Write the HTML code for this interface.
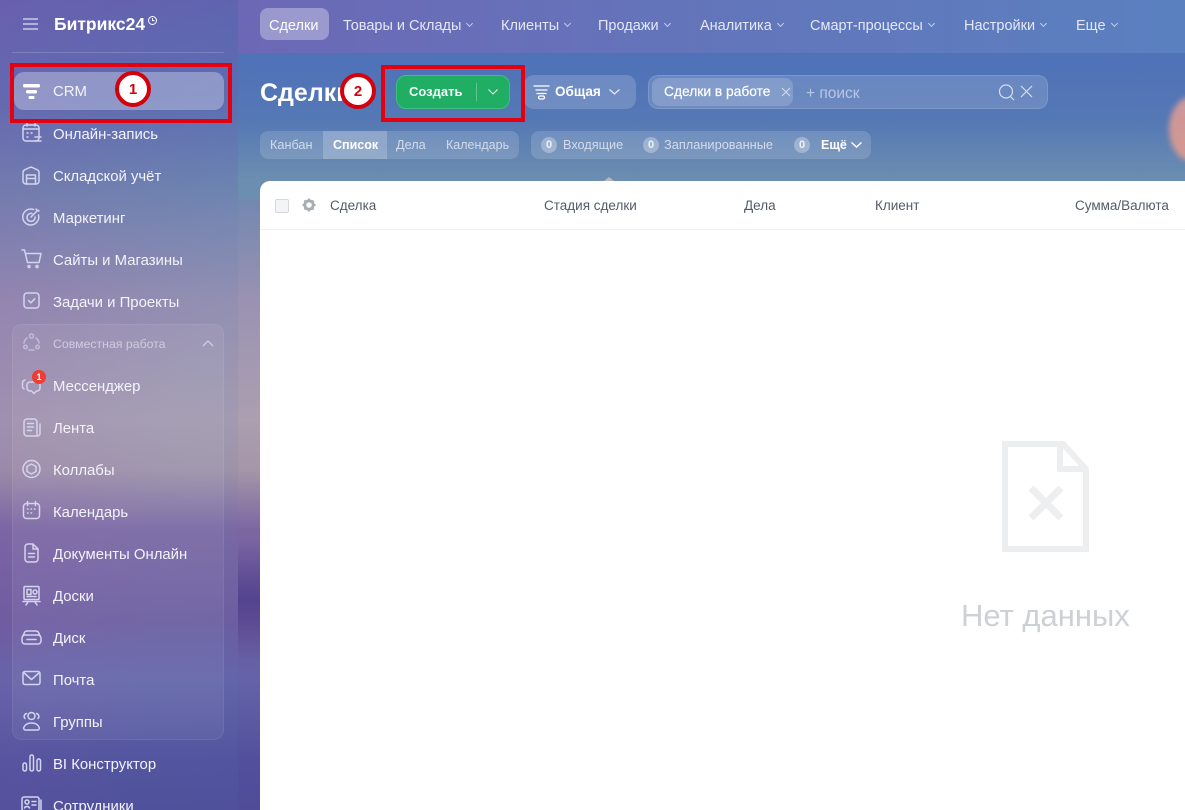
<!DOCTYPE html>
<html lang="ru"><head><meta charset="utf-8"><title>Сделки</title>
<style>
*{box-sizing:border-box}
html,body{margin:0;padding:0;width:1185px;height:810px;overflow:hidden;background:#4f72b8}
body{position:relative;font-family:"Liberation Sans","Noto Sans CJK SC",sans-serif;color:#fff}
.a{position:absolute;white-space:nowrap}
#bg{position:absolute;left:0;top:0;width:1185px;height:810px;overflow:hidden;background:linear-gradient(180deg,#5f62b0 0,#5a6db2 100px,#6f86b0 190px,#9a92b2 300px,#ab9fb0 420px,#a596a8 470px,#7c66a2 530px,#6d5a9e 620px,#6463a8 680px,#52509c 760px,#4f4c98 810px)}
#sd{position:absolute;left:0;top:0;width:238px;height:810px;background:linear-gradient(100deg,rgba(130,90,170,.28),rgba(90,120,180,.12) 70%,rgba(90,120,180,.1))}
#mainbg{position:absolute;left:238px;top:0;width:947px;height:200px;background:linear-gradient(180deg,#5a6cb6 0,#4f72b8 60px,#5578b5 120px,#6c8eb0 181px)}
#top{position:absolute;left:238px;top:0;width:947px;height:53px;background:linear-gradient(90deg,#6c68b6,#6474ba 45%,#5a80c0)}
.nav{position:absolute;top:18px;font-size:14.5px;line-height:17px;color:#e4e8f6;white-space:nowrap}
.nav i{display:inline-block;width:5px;height:5px;border-right:1px solid #c6cde8;border-bottom:1px solid #c6cde8;transform:rotate(45deg);margin:0 1px 4px 6px}
.it{position:absolute;left:53px;margin-top:1px;font-size:14.9px;line-height:18px;color:#f3f3fb;white-space:nowrap}
svg{position:absolute;overflow:visible;fill:none}
.ic{left:21px;width:24px;height:24px;stroke:#d4d4ee;stroke-width:1.5;stroke-linecap:round;stroke-linejoin:round}
.rb{position:absolute;border:4px solid #e3000f}
.num{position:absolute;width:36px;height:36px;border-radius:50%;border:4px solid #d4000c;background:#fff;color:#d4000c;font-weight:bold;font-size:15px;line-height:29px;text-align:center}
.seg{position:absolute;top:131px;height:28px;line-height:28px;font-size:12.7px;color:#d3dcec;white-space:nowrap}
.zero{position:absolute;top:137px;width:16px;height:16px;border-radius:50%;background:rgba(255,255,255,.3);color:#eef2f8;font-size:11px;font-weight:bold;line-height:16px;text-align:center}
.th{position:absolute;top:197px;font-size:13.5px;line-height:17px;color:#525c69;white-space:nowrap}
</style></head><body>
<div id="bg"></div><div id="sd"></div>
<div class="a" style="left:238px;top:540px;width:22px;height:120px;background:linear-gradient(180deg,rgba(74,58,136,0),rgba(74,58,136,.75) 50%,rgba(74,58,136,0))"></div>
<div id="mainbg"></div>
<div class="a" style="left:1169px;top:97px;width:44px;height:64px;border-radius:50%;background:linear-gradient(180deg,#d89c98,#e29a8c);filter:blur(3px);opacity:.9"></div>
<div class="a" style="left:604px;top:177px;width:0;height:0;border-left:5px solid transparent;border-right:5px solid transparent;border-bottom:4px solid #b8b8b8"></div>
<div id="top"></div>

<!-- logo -->
<svg style="left:23px;top:18px;width:16px;height:12px;stroke:#c8cbea;stroke-width:1.4"><path d="M0 1h15M0 6h15M0 11h15"/></svg>
<div class="a" style="left:54px;top:13px;font-size:17.5px;font-weight:bold;line-height:22px;color:#fff">Битрикс24</div>
<svg style="left:148px;top:16px;width:9px;height:9px;stroke:#fff;stroke-width:1"><circle cx="4.500" cy="4.500" r="4"/><path d="M4.500 2v2.600h2"/></svg>
<div class="a" style="left:12px;top:52px;width:212px;height:1px;background:rgba(255,255,255,.17)"></div>

<!-- groups -->
<div class="a" style="left:14px;top:72px;width:210px;height:38px;border-radius:10px;background:rgba(255,255,255,.3)"></div>
<div class="a" style="left:12px;top:324px;width:212px;height:416px;border-radius:10px;background:rgba(255,255,255,.06);border:1px solid rgba(255,255,255,.06)"></div>

<!-- sidebar items -->
<svg style="left:23px;top:84px;width:17px;height:16px;fill:#fff"><rect x="0" y="0" width="17" height="3.500" rx="1.500"/><rect x="3" y="6" width="11" height="3.500" rx="1.500"/><rect x="5.500" y="12" width="6" height="3" rx="1.400"/></svg>
<div class="it" style="top:82px">CRM</div>

<svg class="ic" style="top:122px"><rect x="2" y="3" width="16" height="16" rx="3"/><path d="M6 1v3M14 1v3M2 7h16M6 11h1M10 11h1M6 15h1M14 15h6M14 19h6"/></svg>
<div class="it" style="top:125px">Онлайн-запись</div>
<svg class="ic" style="top:164px"><path d="M2 8.500a3 3 0 0 1 1.700-2.700l5-2.300a3 3 0 0 1 2.600 0l5 2.300a3 3 0 0 1 1.700 2.700V17a3 3 0 0 1-3 3H5a3 3 0 0 1-3-3z"/><path d="M5.500 20v-9h9v9M5.500 14.500h9"/></svg>
<div class="it" style="top:167px">Складской учёт</div>
<svg class="ic" style="top:206px"><path d="M17.500 9a8 8 0 1 1-5-5.500M14 11a4 4 0 1 1-3-3.500"/><path d="M10 11l7-7M15 3l1 1.500 2 .5"/></svg>
<div class="it" style="top:209px">Маркетинг</div>
<svg class="ic" style="top:248px"><path d="M1 2h2.500l3 12.500h11.500l2-9H4.500"/><circle cx="8" cy="18.500" r="1"/><circle cx="16" cy="18.500" r="1"/></svg>
<div class="it" style="top:251px">Сайты и Магазины</div>
<svg class="ic" style="top:290px"><rect x="3" y="3" width="15" height="15" rx="3"/><path d="M7.500 10.500l2.300 2.300 4-4"/></svg>
<div class="it" style="top:293px">Задачи и Проекты</div>

<svg class="ic" style="top:332px;opacity:.65"><circle cx="10.500" cy="4" r="2"/><circle cx="4.500" cy="15" r="1.800"/><circle cx="16.500" cy="15" r="1.800"/><path d="M6 6a8 8 0 0 0-3 5M15 6a8 8 0 0 1 3 5M8 18h5"/></svg>
<div class="a" style="left:53px;top:337px;font-size:12.300px;line-height:15px;color:#cfcbe0">Совместная работа</div>
<svg style="left:202px;top:340px;width:13px;height:7px;stroke:#cfcbe0;stroke-width:1.300"><path d="M1 6l5-5 5 5"/></svg>

<svg class="ic" style="top:374px"><path d="M4 6a3 3 0 0 0-2.500 3v3a3 3 0 0 0 1.500 3"/><path d="M9 8h7a3 3 0 0 1 3 3v3a3 3 0 0 1-3 3h-.500l-2.500 2.500-2.500-2.500H9a3 3 0 0 1-3-3v-3a3 3 0 0 1 3-3z"/></svg>
<div class="a" style="left:32px;top:370px;width:14px;height:14px;border-radius:50%;background:#ee3d35;color:#fff;font-size:9px;font-weight:bold;line-height:14px;text-align:center">1</div>
<div class="it" style="top:377px">Мессенджер</div>
<svg class="ic" style="top:416px"><path d="M16 20H6a3 3 0 0 1-3-3V6a3 3 0 0 1 3-3h7a3 3 0 0 1 3 3v14a3 3 0 0 0 3-2V8"/><path d="M6.500 7.500h6M6.500 11h6M6.500 14.500h4"/></svg>
<div class="it" style="top:419px">Лента</div>
<svg class="ic" style="top:458px"><circle cx="10.500" cy="11" r="8.500"/><path d="M10.500 6l4.500 2.500v5l-4.500 2.500-4.500-2.500v-5z"/></svg>
<div class="it" style="top:461px">Коллабы</div>
<svg class="ic" style="top:500px"><rect x="2.500" y="3.500" width="16" height="15" rx="3"/><path d="M6.500 1.500v4M14.500 1.500v4M6.500 9h.500M10 9h.500M13.500 9h.500M6.500 13h.500M10 13h.500"/></svg>
<div class="it" style="top:503px">Календарь</div>
<svg class="ic" style="top:542px"><path d="M12 2H7a3 3 0 0 0-3 3v12a3 3 0 0 0 3 3h7a3 3 0 0 0 3-3V7zM12 2v5h5M7.500 11.500h6M7.500 15h6"/></svg>
<div class="it" style="top:545px">Документы Онлайн</div>
<svg class="ic" style="top:584px"><rect x="3" y="2.500" width="15" height="13" rx="1"/><path d="M2 17.500h17M7 18l-2 3M14 18l2 3M6 5.500h4v5H6zM6 12.500h9"/><circle cx="14" cy="8" r="2"/></svg>
<div class="it" style="top:587px">Доски</div>
<svg class="ic" style="top:626px"><path d="M2 10l1-2.500a3.500 3.500 0 0 1 3-2.500h9a3.500 3.500 0 0 1 3 2.500l1 2.500"/><rect x="1" y="9" width="19" height="9" rx="3"/><path d="M6 13.500h9"/></svg>
<div class="it" style="top:629px">Диск</div>
<svg class="ic" style="top:668px"><rect x="2" y="3.500" width="17" height="13" rx="2"/><path d="M2.500 4.500l8 7 8-7"/></svg>
<div class="it" style="top:671px">Почта</div>
<svg class="ic" style="top:710px"><circle cx="10.500" cy="6" r="3.500"/><path d="M4 20h13a2 2 0 0 0 1-3c-1.500-3-4-4-7.500-4S4.500 14 3 17a2 2 0 0 0 1 3zM5.500 3.500a3 3 0 0 0-1.500 5M15.500 3.500a3 3 0 0 1 1.500 5"/></svg>
<div class="it" style="top:713px">Группы</div>
<svg class="ic" style="top:752px"><rect x="2" y="11" width="3.500" height="8" rx="1.700"/><rect x="9" y="3" width="3.500" height="16" rx="1.700"/><rect x="16" y="7" width="3.500" height="12" rx="1.700"/></svg>
<div class="it" style="top:755px">BI Конструктор</div>
<svg class="ic" style="top:794px"><rect x="1" y="3" width="17" height="14" rx="2"/><circle cx="6" cy="8" r="2"/><path d="M3.500 14c.5-2 4.500-2 5 0M11 7.500h4M11 11h4M20 6v10"/></svg>
<div class="it" style="top:797px">Сотрудники</div>

<!-- nav -->
<div class="a" style="left:260px;top:8px;width:69px;height:32px;border-radius:8px;background:rgba(255,255,255,.32)"></div>
<div class="nav" style="left:269px;color:#fff">Сделки</div>
<div class="nav" style="left:343px">Товары и Склады<i></i></div>
<div class="nav" style="left:501px">Клиенты<i></i></div>
<div class="nav" style="left:598px">Продажи<i></i></div>
<div class="nav" style="left:700px">Аналитика<i></i></div>
<div class="nav" style="left:810px">Смарт-процессы<i></i></div>
<div class="nav" style="left:964px">Настройки<i></i></div>
<div class="nav" style="left:1076px">Еще<i></i></div>

<!-- title row -->
<div class="a" style="left:260px;top:78px;font-size:25px;font-weight:bold;line-height:30px;color:#fff">Сделки</div>

<div class="a" style="left:396px;top:75px;width:114px;height:34px;border-radius:10px;background:#1fae63;border:1px solid #3cc07c"></div>
<div class="a" style="left:409px;top:84px;font-size:13px;font-weight:bold;line-height:16px;color:#f3fbf6">Создать</div>
<div class="a" style="left:476px;top:83px;width:1px;height:18px;background:rgba(255,255,255,.3)"></div>
<svg style="left:488px;top:89px;width:10px;height:6px;stroke:#e8f7ee;stroke-width:1.100"><path d="M.5.500l4.500 4.500 4.500-4.500"/></svg>

<div class="a" style="left:524px;top:75px;width:112px;height:34px;border-radius:10px;background:rgba(255,255,255,.17)"></div>
<svg style="left:533px;top:85px;width:17px;height:15px;stroke:#fff;stroke-width:1.300;stroke-linecap:round"><path d="M1 1h15M3 5h11M4 8.500h9"/><rect x="5.500" y="11" width="6" height="3" rx="1.500"/></svg>
<div class="a" style="left:555px;top:84px;font-size:13.500px;font-weight:bold;line-height:16px;color:#fff">Общая</div>
<svg style="left:609px;top:89px;width:11px;height:6px;stroke:#e8edf8;stroke-width:1.200"><path d="M.5.500l5 4.500 5-4.500"/></svg>

<div class="a" style="left:648px;top:75px;width:400px;height:34px;border-radius:10px;background:rgba(255,255,255,.14);border:1px solid rgba(255,255,255,.12)"></div>
<div class="a" style="left:652px;top:78px;width:141px;height:28px;border-radius:8px;background:rgba(255,255,255,.17)"></div>
<div class="a" style="left:664px;top:84px;font-size:13.800px;line-height:16px;color:#fff;-webkit-text-stroke:.2px #fff">Сделки в работе</div>
<svg style="left:781px;top:87px;width:10px;height:10px;stroke:#d5deef;stroke-width:1"><path d="M1 1l8 8M9 1l-8 8"/></svg>
<div class="a" style="left:806px;top:85px;font-size:15.500px;line-height:17px;color:#b7c6e2">+ поиск</div>
<svg style="left:998px;top:84px;width:17px;height:17px;stroke:#d5deef;stroke-width:1.200"><circle cx="8" cy="7.500" r="6.500"/><path d="M12.500 12.500l3.500 3.500"/></svg>
<svg style="left:1020px;top:85px;width:13px;height:13px;stroke:#d5deef;stroke-width:1.200"><path d="M1 1l11 11M12 1l-11 11"/></svg>

<!-- tabs -->
<div class="a" style="left:260px;top:131px;width:259px;height:28px;border-radius:8px;background:rgba(255,255,255,.15)"></div>
<div class="a" style="left:323px;top:131px;width:64px;height:28px;background:rgba(255,255,255,.2)"></div>
<div class="seg" style="left:270px">Канбан</div>
<div class="seg" style="left:333px;color:#fff;font-weight:bold;font-size:12.500px">Список</div>
<div class="seg" style="left:396px">Дела</div>
<div class="seg" style="left:446px;font-size:12.500px">Календарь</div>

<div class="a" style="left:531px;top:131px;width:340px;height:28px;border-radius:8px;background:rgba(255,255,255,.15)"></div>
<div class="zero" style="left:541px">0</div>
<div class="seg" style="left:563px">Входящие</div>
<div class="zero" style="left:643px">0</div>
<div class="seg" style="left:664px;font-size:12.800px">Запланированные</div>
<div class="zero" style="left:794px">0</div>
<div class="seg" style="left:821px;color:#fff;font-weight:bold;font-size:12.500px">Ещё</div>
<svg style="left:851px;top:142px;width:11px;height:6px;stroke:#fff;stroke-width:1.500"><path d="M.5.500l5 4.500 5-4.500"/></svg>

<!-- table -->
<div class="a" style="left:260px;top:181px;width:925px;height:629px;background:#fff;border-radius:10px 0 0 0"></div>
<div class="a" style="left:260px;top:229px;width:925px;height:1px;background:#eef0f2"></div>
<div class="a" style="left:275px;top:199px;width:14px;height:14px;border-radius:2px;background:#f3f4f5;border:1px solid #d5d7db"></div>
<svg style="left:302px;top:198px;width:14px;height:14px"><circle cx="7" cy="7" r="4.200" stroke="#a8adb4" stroke-width="2.800"/><path d="M7 .500v2.500M7 11v2.500M.5 7h2.500M11 7h2.500M2.400 2.400l1.800 1.800M9.800 9.800l1.800 1.800M11.600 2.400l-1.800 1.800M4.200 9.800l-1.800 1.800" stroke="#a8adb4" stroke-width="2"/></svg>
<div class="th" style="left:330px">Сделка</div>
<div class="th" style="left:544px">Стадия сделки</div>
<div class="th" style="left:744px">Дела</div>
<div class="th" style="left:875px">Клиент</div>
<div class="th" style="left:1075px">Сумма/Валюта</div>

<!-- empty -->
<svg style="left:1002px;top:441px;width:87px;height:111px;stroke:#eceef0;stroke-width:6"><path d="M3 3h58l23 25v80H3z"/><path d="M58 3v25h26"/><path d="M29 47l30 30M59 47l-30 30" stroke-width="7"/></svg>
<div class="a" style="left:961px;top:598px;font-size:31px;line-height:36px;color:#cdd0d4">Нет данных</div>

<!-- annotations -->
<div class="rb" style="left:10px;top:63px;width:222px;height:60px"></div>
<div class="num" style="left:115px;top:71px">1</div>
<div class="rb" style="left:381px;top:65px;width:144px;height:57px"></div>
<div class="num" style="left:340px;top:73px">2</div>
</body></html>
